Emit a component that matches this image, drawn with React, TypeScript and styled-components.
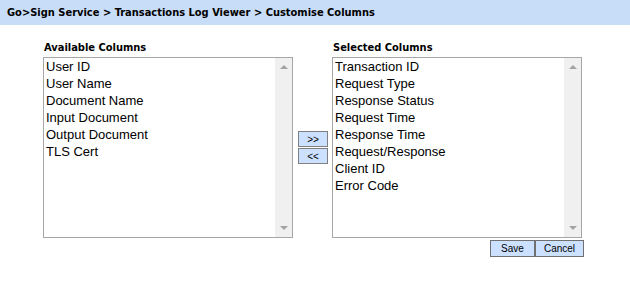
import styled, { createGlobalStyle } from "styled-components";

const GlobalStyle = createGlobalStyle`
  html, body {
    margin: 0;
    padding: 0;
    background: #fff;
  }
`;

const Page = styled.div`
  width: 630px;
  height: 300px;
  background: #fff;
  font-family: "Liberation Sans", Arial, sans-serif;
  color: #000;
`;

const Breadcrumb = styled.div`
  height: 25px;
  display: flex;
  align-items: center;
  padding-left: 7px;
  background: #c8ddf8;
  font-family: "DejaVu Sans Condensed", "DejaVu Sans", sans-serif;
  font-stretch: condensed;
  font-weight: bold;
  font-size: 11px;
  color: #000;
`;

const Editor = styled.div`
  display: flex;
  align-items: flex-start;
  padding: 15px 0 0 43px;
`;

const Column = styled.div`
  display: flex;
  flex-direction: column;
  width: 250px;
`;

const Label = styled.div`
  height: 17px;
  line-height: 16px;
  padding-left: 1px;
  font-family: "DejaVu Sans Condensed", "DejaVu Sans", sans-serif;
  font-stretch: condensed;
  font-weight: bold;
  font-size: 11px;
`;

const ListBox = styled.div`
  display: flex;
  height: 181px;
  border: 1px solid #a6a6a6;
  background: #fff;
  box-sizing: border-box;
`;

const Items = styled.div`
  flex: 1;
  padding-left: 2px;
`;

const Item = styled.div`
  font-size: 13px;
  line-height: 17px;
  white-space: nowrap;
`;

const ScrollBar = styled.div`
  width: 17px;
  background: #f0f0f0;
  display: flex;
  flex-direction: column;
  justify-content: space-between;
  align-items: center;
  padding: 7px 0;
`;

const Arrow = styled.div<{ $down?: boolean }>`
  width: 0;
  height: 0;
  border-left: 4px solid transparent;
  border-right: 4px solid transparent;
  ${(p) =>
    p.$down
      ? "border-top: 4px solid #a3a3a3;"
      : "border-bottom: 4px solid #a3a3a3;"}
`;

const Mover = styled.div`
  display: flex;
  flex-direction: column;
  justify-content: center;
  gap: 1px;
  height: 181px;
  margin: 17px 4px 0 5px;
`;

const SmallButton = styled.button`
  width: 30px;
  height: 16px;
  padding: 0;
  border: 1px solid #808080;
  background: #cce0ff;
  font-family: "Liberation Sans", Arial, sans-serif;
  font-size: 10px;
  color: #000;
`;

const Actions = styled.div`
  display: flex;
  justify-content: flex-end;
  margin: 2px -2px 0 0;
`;

const ActionButton = styled.button<{ $w: number }>`
  width: ${(p) => p.$w}px;
  height: 17px;
  padding: 0;
  border: 1px solid #707070;
  background: #cce0ff;
  font-family: "Liberation Sans", Arial, sans-serif;
  font-size: 10px;
  color: #000;
`;

const available = [
  "User ID",
  "User Name",
  "Document Name",
  "Input Document",
  "Output Document",
  "TLS Cert",
];

const selected = [
  "Transaction ID",
  "Request Type",
  "Response Status",
  "Request Time",
  "Response Time",
  "Request/Response",
  "Client ID",
  "Error Code",
];

const List = ({ items }: { items: string[] }) => (
  <ListBox>
    <Items>
      {items.map((t) => (
        <Item key={t}>{t}</Item>
      ))}
    </Items>
    <ScrollBar>
      <Arrow />
      <Arrow $down />
    </ScrollBar>
  </ListBox>
);

export default function App() {
  return (
    <Page>
      <GlobalStyle />
      <Breadcrumb>Go&gt;Sign Service &gt; Transactions Log Viewer &gt; Customise Columns</Breadcrumb>
      <Editor>
        <Column>
          <Label>Available Columns</Label>
          <List items={available} />
        </Column>
        <Mover>
          <SmallButton>&gt;&gt;</SmallButton>
          <SmallButton>&lt;&lt;</SmallButton>
        </Mover>
        <Column>
          <Label>Selected Columns</Label>
          <List items={selected} />
          <Actions>
            <ActionButton $w={45}>Save</ActionButton>
            <ActionButton $w={49}>Cancel</ActionButton>
          </Actions>
        </Column>
      </Editor>
    </Page>
  );
}
